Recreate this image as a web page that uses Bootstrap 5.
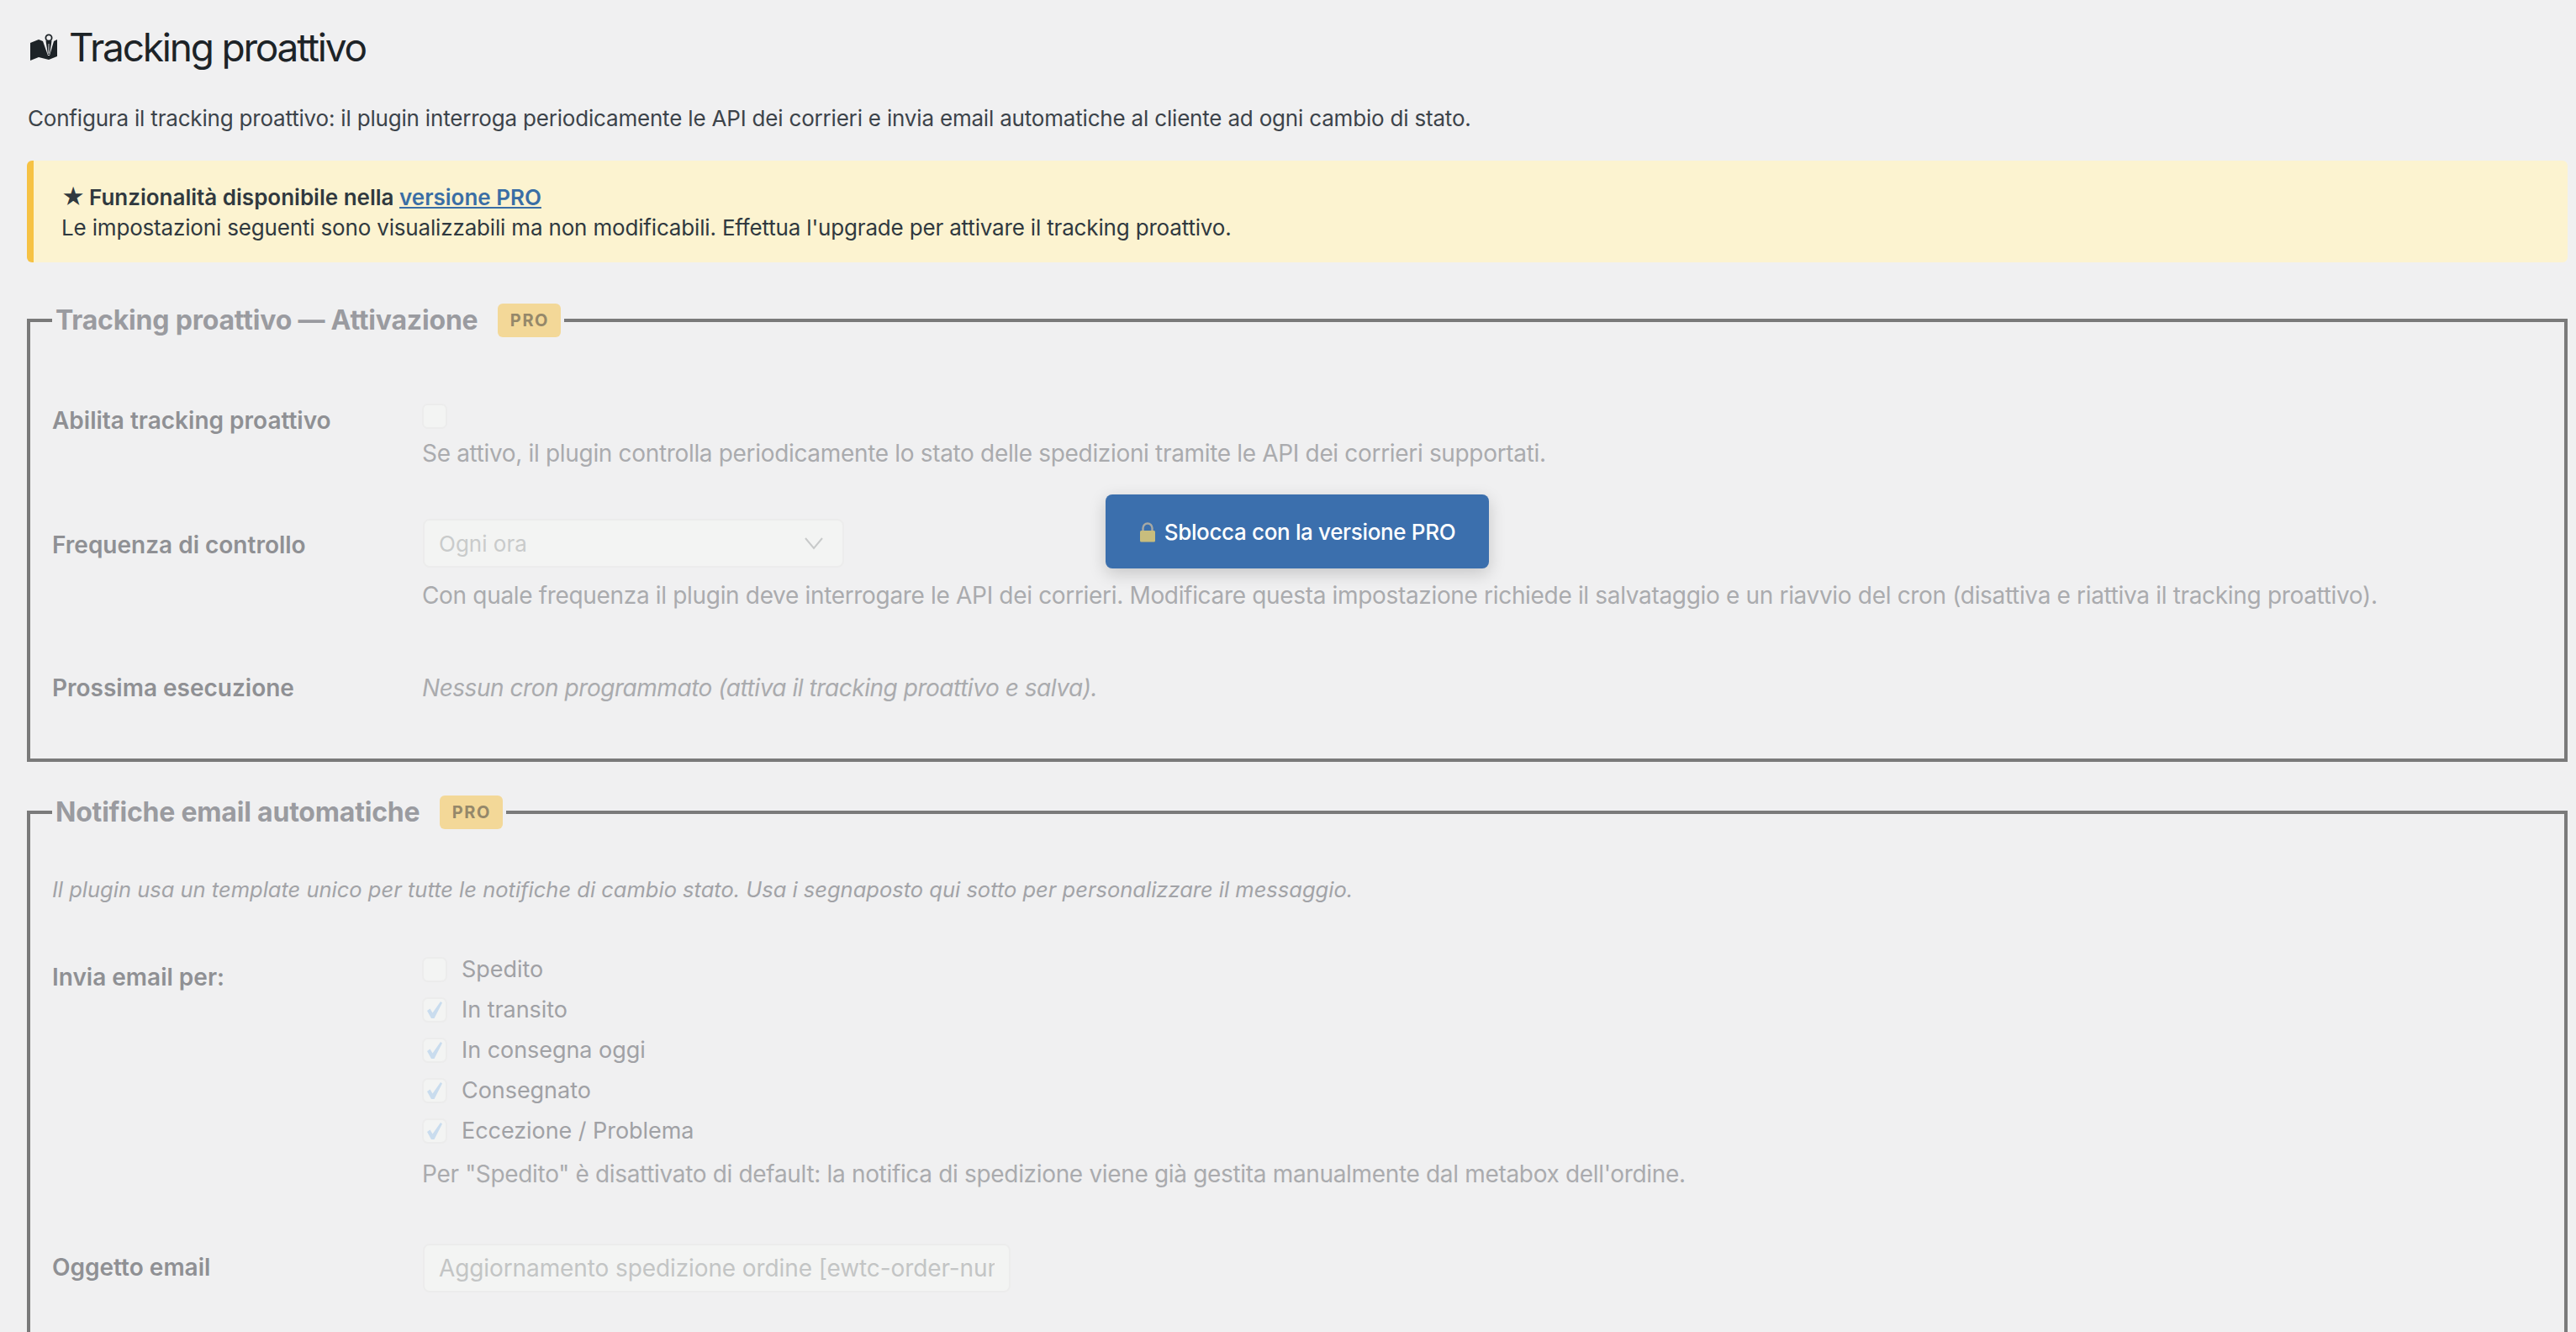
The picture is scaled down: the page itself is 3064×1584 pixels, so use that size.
<!doctype html>
<html lang="it"><head><meta charset="utf-8"><title>Tracking proattivo</title>
<link rel="stylesheet" href="https://cdn.jsdelivr.net/npm/bootstrap@5.3.0/dist/css/bootstrap.min.css">
<style>
html,body{height:1584px;overflow:hidden}
body{background:#f0f0f1;font-family:Inter,"Noto Sans",sans-serif;font-size:26px;line-height:36px;color:#3c434a;padding:0 10px 0 32px}
.shell{position:relative}
.page-title{font-size:46px;line-height:58px;font-weight:400;letter-spacing:-2.2px;color:#1d2327;margin:0;padding-top:27px;display:flex;align-items:center;gap:14px;margin-left:4px}
.page-title svg{width:32px;height:32px;flex:none}
.intro{margin:38px 0 0 1px;line-height:36px;letter-spacing:-.19px}
.pro-note{margin-top:32px;height:121px;background:#fcf3d0;border-left:8px solid #f6c244;border-radius:6px;padding:26px 33px;color:#30393f;letter-spacing:-.17px}
.pro-note a{color:#3a6ea5}
.pro-note b{font-weight:600;letter-spacing:0}
.note-star{display:inline-block;width:33px;font-size:27px;line-height:0}
.pro-set{border:4px solid #7a7a7a;padding:0 26px;margin:0;min-width:0}
.pro-set legend{float:none;width:auto;margin:0;padding:0 4px;display:flex;align-items:center;gap:24px;font-size:32px;line-height:40px;font-weight:700;letter-spacing:-.2px;color:#9a9ba0}
.set-one{margin-top:49px;height:545px}
.set-two{margin-top:40px;height:800px}
.pro-tag{background:#f3d898;color:#95886a;border-radius:6px;width:75px;height:40px;font-size:20px;font-weight:700;letter-spacing:1.6px;display:flex;align-items:center;justify-content:center}
.set-row{display:flex}
.set-label{width:440px;flex:none;font-weight:600;color:#8f9094;font-size:28px}
.set-help{color:#aaabae;font-size:28px;letter-spacing:-.33px}
.set-check{appearance:none;display:block;width:30px;height:30px;margin:0;background:#f3f4f3;border:2px solid #ececec;border-radius:8px}
.set-check:disabled{opacity:1}
.form-check-input.set-check:checked{background-color:#f3f4f3;border-color:#ececec;background-position:center;background-repeat:no-repeat;background-size:24px 24px;background-image:url("data:image/svg+xml,%3Csvg xmlns='http://www.w3.org/2000/svg' viewBox='0 0 24 24'%3E%3Cpath fill='%23c9dcee' d='M3 13l3.500-2.500 3 5L19 2l2 1.500-9.500 18.500h-3.500z'/%3E%3C/svg%3E")}
.set-select{width:501px;height:58px;margin-left:1px;background-color:#f3f4f3;border:2px solid #ececec;border-radius:8px;color:#c9cbcb;font-size:26px;padding:0 17px;background-position:right 22px center;background-size:24px 18px;box-shadow:none;background-image:url("data:image/svg+xml,%3Csvg xmlns='http://www.w3.org/2000/svg' viewBox='0 0 24 18'%3E%3Cpath fill='none' stroke='%23c8caca' stroke-width='2' d='M2 3l10 12L22 3'/%3E%3C/svg%3E")}
.set-select:disabled{background-color:#f3f4f3}
.set-input{width:699px;height:58px;margin-left:1px;background:#f3f4f3;border:2px solid #ececec;border-radius:8px;color:#c3c5c5;font-size:28px;letter-spacing:-.1px;padding:0 17px}
.set-input:disabled{background:#f3f4f3;color:#c3c5c5}
.row-a{margin-top:66px}
.row-a .set-label{padding-top:15px}
.row-a .set-check{margin-top:13px}
.row-a .set-help{margin-top:11px}
.row-b{margin-top:60px}
.row-b .set-label{padding-top:13px}
.row-b .set-help{margin-top:15px}
.row-c{margin-top:74px}
.row-c .set-help{letter-spacing:-.46px}
.lead-note{margin-top:54px;font-style:italic;color:#a2a3a7;font-size:25.5px}
.row-d{margin-top:62px}
.row-d .set-label{padding-top:6px}
.opt{display:flex;align-items:center;gap:17px;height:30px;margin-bottom:18px;color:#a0a1a5;font-size:27px;letter-spacing:-.05px}
.row-d .set-help{margin-top:6px}
.row-e{margin-top:65px}
.row-e .set-label{padding-top:10px}
.unlock{position:absolute;left:1283px;top:588px;width:456px;height:88px;display:flex;align-items:center;justify-content:center;gap:10px;background:#3b6fad;color:#fff;border:0;border-radius:8px;font-size:26px;font-weight:500;letter-spacing:-.35px;box-shadow:0 6px 20px rgba(0,0,0,.18);padding:2px 0 0}
.unlock svg{width:20px;height:24px;flex:none}
</style></head><body>
<div class="shell">
<h1 class="page-title"><svg viewBox="0 0 32 32" aria-hidden="true"><path fill="#1d2327" d="M0 11l10-4 5 2 6 17h2l5-17 4-2v20l-10 4-12-3-10 4z"/><circle cx="22" cy="5" r="3.600" fill="none" stroke="#1d2327" stroke-width="1.800"/><path fill="#1d2327" d="M18.500 8.500h7L23 25h-2z"/><path fill="#f0f0f1" d="M21.600 12h.8l.2 12h-1.200z"/></svg>Tracking proattivo</h1>
<p class="intro">Configura il tracking proattivo: il plugin interroga periodicamente le API dei corrieri e invia email automatiche al cliente ad ogni cambio di stato.</p>
<div class="pro-note"><b><span class="note-star">★</span>Funzionalità disponibile nella <a href="#">versione PRO</a></b><br>Le impostazioni seguenti sono visualizzabili ma non modificabili. Effettua l'upgrade per attivare il tracking proattivo.</div>
<fieldset class="pro-set set-one">
<legend>Tracking proattivo — Attivazione <span class="pro-tag">PRO</span></legend>
<div class="set-row row-a"><div class="set-label">Abilita tracking proattivo</div><div><input class="form-check-input set-check" type="checkbox" disabled aria-label="Abilita"><div class="set-help">Se attivo, il plugin controlla periodicamente lo stato delle spedizioni tramite le API dei corrieri supportati.</div></div></div>
<div class="set-row row-b"><div class="set-label">Frequenza di controllo</div><div><select class="form-select set-select" disabled><option>Ogni ora</option></select><div class="set-help">Con quale frequenza il plugin deve interrogare le API dei corrieri. Modificare questa impostazione richiede il salvataggio e un riavvio del cron (disattiva e riattiva il tracking proattivo).</div></div></div>
<div class="set-row row-c"><div class="set-label">Prossima esecuzione</div><div class="set-help fst-italic">Nessun cron programmato (attiva il tracking proattivo e salva).</div></div>
</fieldset>
<fieldset class="pro-set set-two">
<legend>Notifiche email automatiche <span class="pro-tag">PRO</span></legend>
<div class="lead-note">Il plugin usa un template unico per tutte le notifiche di cambio stato. Usa i segnaposto qui sotto per personalizzare il messaggio.</div>
<div class="set-row row-d"><div class="set-label">Invia email per:</div><div>
<label class="opt"><input class="form-check-input set-check" type="checkbox" disabled>Spedito</label>
<label class="opt"><input class="form-check-input set-check" type="checkbox" checked disabled>In transito</label>
<label class="opt"><input class="form-check-input set-check" type="checkbox" checked disabled>In consegna oggi</label>
<label class="opt"><input class="form-check-input set-check" type="checkbox" checked disabled>Consegnato</label>
<label class="opt"><input class="form-check-input set-check" type="checkbox" checked disabled>Eccezione / Problema</label>
<div class="set-help">Per "Spedito" è disattivato di default: la notifica di spedizione viene già gestita manualmente dal metabox dell'ordine.</div></div></div>
<div class="set-row row-e"><div class="set-label">Oggetto email</div><input class="form-control set-input" type="text" disabled value="Aggiornamento spedizione ordine [ewtc-order-number]"></div>
</fieldset>
<button class="unlock" type="button"><svg viewBox="0 0 20 24" aria-hidden="true"><path fill="none" stroke="#a7a9a4" stroke-width="2.400" d="M4.500 11V7a5.500 5.500 0 0 1 11 0v4"/><rect x="1" y="10" width="18" height="13.500" rx="1.500" fill="#c8bd7d"/></svg>Sblocca con la versione PRO</button>
</div>
<script src="https://cdn.jsdelivr.net/npm/bootstrap@5.3.0/dist/js/bootstrap.bundle.min.js"></script>
</body></html>
